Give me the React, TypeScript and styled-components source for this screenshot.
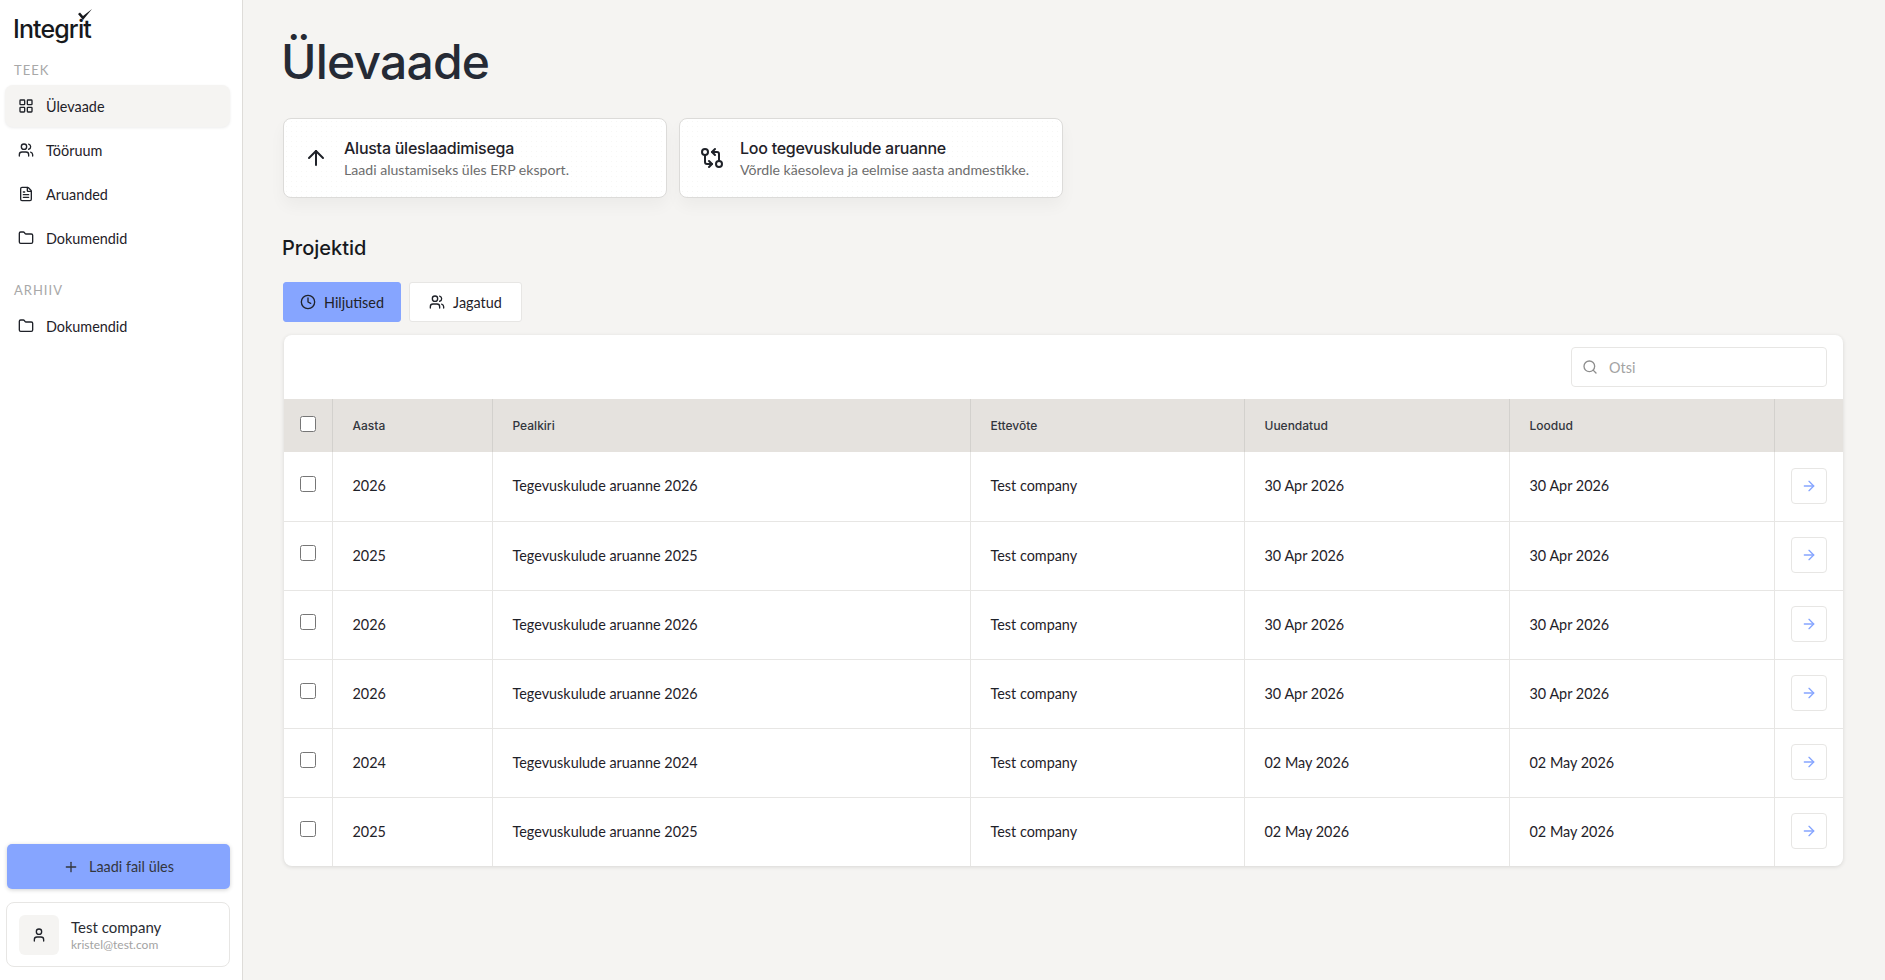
import styled, { createGlobalStyle } from "styled-components";
import {
    ArrowRight,
    ArrowUp,
    Clock,
    FileText,
    Folder,
    GitCompareArrows,
    LayoutGrid,
    Plus,
    Search,
    User,
    Users,
} from "lucide-react";

const accent = "#86a5ff";
const paper = "#f5f4f2";
const line = "#e7e6e4";
const ink = "#1f2229";

const rows = [
    { year: "2026", updated: "30 Apr 2026" },
    { year: "2025", updated: "30 Apr 2026" },
    { year: "2026", updated: "30 Apr 2026" },
    { year: "2026", updated: "30 Apr 2026" },
    { year: "2024", updated: "02 May 2026" },
    { year: "2025", updated: "02 May 2026" },
];

const columns = [48, 160, 478, 274, 265, 265, 69];

const App = () => {
    return (
        <Page>
            <GlobalStyle />
            <Sidebar>
                <Logo>
                    Integrit
                    <LogoCheck viewBox="0 0 14 11" width="14" height="11">
                        <path d="M0 5 L2 3.6 L5 7 L14 0 L5 11 Z" />
                    </LogoCheck>
                </Logo>
                <SectionLabel>TEEK</SectionLabel>
                <NavList>
                    <NavItem $active>
                        <LayoutGrid size={16} />
                        Ülevaade
                    </NavItem>
                    <NavItem>
                        <Users size={16} />
                        Tööruum
                    </NavItem>
                    <NavItem>
                        <FileText size={16} />
                        Aruanded
                    </NavItem>
                    <NavItem>
                        <Folder size={16} />
                        Dokumendid
                    </NavItem>
                </NavList>
                <SectionLabel $spaced>ARHIIV</SectionLabel>
                <NavList>
                    <NavItem>
                        <Folder size={16} />
                        Dokumendid
                    </NavItem>
                </NavList>
                <SidebarFooter>
                    <UploadButton>
                        <Plus size={16} />
                        Laadi fail üles
                    </UploadButton>
                    <UserCard>
                        <Avatar>
                            <User size={16} />
                        </Avatar>
                        <div>
                            <UserName>Test company</UserName>
                            <UserMail>kristel@test.com</UserMail>
                        </div>
                    </UserCard>
                </SidebarFooter>
            </Sidebar>

            <Main>
                <Title>Ülevaade</Title>
                <Actions>
                    <ActionCard>
                        <ArrowUp size={24} />
                        <div>
                            <ActionTitle>Alusta üleslaadimisega</ActionTitle>
                            <ActionText>
                                Laadi alustamiseks üles ERP eksport.
                            </ActionText>
                        </div>
                    </ActionCard>
                    <ActionCard>
                        <GitCompareArrows size={24} />
                        <div>
                            <ActionTitle>Loo tegevuskulude aruanne</ActionTitle>
                            <ActionText>
                                Võrdle käesoleva ja eelmise aasta andmestikke.
                            </ActionText>
                        </div>
                    </ActionCard>
                </Actions>

                <SectionTitle>Projektid</SectionTitle>
                <Tabs>
                    <Tab $active>
                        <Clock size={16} />
                        Hiljutised
                    </Tab>
                    <Tab>
                        <Users size={16} />
                        Jagatud
                    </Tab>
                </Tabs>

                <TableCard>
                    <Toolbar>
                        <SearchBox>
                            <Search size={16} />
                            <SearchInput placeholder="Otsi" />
                        </SearchBox>
                    </Toolbar>
                    <Table>
                        <colgroup>
                            {columns.map((width, i) => (
                                <col key={i} style={{ width }} />
                            ))}
                        </colgroup>
                        <thead>
                            <tr>
                                <CheckHead>
                                    <Checkbox type="checkbox" />
                                </CheckHead>
                                <HeadCell>Aasta</HeadCell>
                                <HeadCell>Pealkiri</HeadCell>
                                <HeadCell>Ettevõte</HeadCell>
                                <HeadCell>Uuendatud</HeadCell>
                                <HeadCell>Loodud</HeadCell>
                                <HeadCell />
                            </tr>
                        </thead>
                        <tbody>
                            {rows.map((row, i) => (
                                <tr key={i}>
                                    <CheckCell>
                                        <Checkbox type="checkbox" />
                                    </CheckCell>
                                    <Cell>{row.year}</Cell>
                                    <Cell>Tegevuskulude aruanne {row.year}</Cell>
                                    <Cell>Test company</Cell>
                                    <Cell>{row.updated}</Cell>
                                    <Cell>{row.updated}</Cell>
                                    <ArrowCell>
                                        <OpenButton>
                                            <ArrowRight size={16} />
                                        </OpenButton>
                                    </ArrowCell>
                                </tr>
                            ))}
                        </tbody>
                    </Table>
                </TableCard>
            </Main>
        </Page>
    );
};

const GlobalStyle = createGlobalStyle`
    * {
        box-sizing: border-box;
    }

    body {
        margin: 0;
        font-family: "Lato", "Liberation Sans", sans-serif;
        color: ${ink};
        background: ${paper};
    }
`;

const Page = styled.div`
    display: flex;

    height: 980px;
    overflow: hidden;
`;

const Sidebar = styled.aside`
    display: flex;
    flex-direction: column;
    flex-shrink: 0;

    width: 243px;
    padding: 0 12px 13px 5px;

    background: white;
    border-right: 1px solid #dedcd9;
`;

const Logo = styled.div`
    position: relative;

    width: fit-content;
    margin: 11px 0 0 8px;

    font-family: "Inter", sans-serif;
    font-size: 25px;
    font-weight: 500;
    line-height: 36px;
    letter-spacing: -0.9px;
    color: #17191d;
`;

const LogoCheck = styled.svg`
    position: absolute;
    top: -2px;
    right: -1px;

    & path {
        fill: #17191d;
    }
`;

const SectionLabel = styled.div<{ $spaced?: boolean }>`
    margin: ${(props) => (props.$spaced ? "24px" : "16px")} 0 7px 9px;

    font-size: 13px;
    line-height: 15px;
    letter-spacing: 1px;
    color: #a8a8a8;
`;

const NavList = styled.nav`
    display: flex;
    flex-direction: column;
    gap: 2px;
`;

const NavItem = styled.a<{ $active?: boolean }>`
    display: flex;
    align-items: center;
    gap: 12px;

    height: 42px;
    padding-left: 13px;

    font-size: 14.4px;
    color: ${ink};

    background: ${(props) => (props.$active ? paper : "transparent")};
    border-radius: 8px;
    box-shadow: ${(props) =>
        props.$active ? "0 1px 3px rgba(0, 0, 0, 0.08)" : "none"};
`;

const SidebarFooter = styled.div`
    display: flex;
    flex-direction: column;
    gap: 13px;

    margin-top: auto;
`;

const UploadButton = styled.button`
    display: flex;
    align-items: center;
    justify-content: center;
    gap: 10px;

    height: 45px;
    margin: 0 0 0 2px;

    font: inherit;
    font-size: 14.4px;
    color: #33363d;

    background: ${accent};
    border: none;
    border-radius: 5px;
    box-shadow: 0 1px 4px rgba(0, 0, 0, 0.18);
`;

const UserCard = styled.div`
    display: flex;
    align-items: center;
    gap: 12px;

    height: 65px;
    margin-left: 1px;
    padding: 0 12px;

    border: 1px solid ${line};
    border-radius: 8px;
`;

const Avatar = styled.div`
    display: flex;
    align-items: center;
    justify-content: center;

    width: 40px;
    height: 40px;

    background: ${paper};
    border-radius: 6px;
`;

const UserName = styled.div`
    font-size: 15px;
    line-height: 20px;
    color: #2a2c33;
`;

const UserMail = styled.div`
    font-size: 12px;
    line-height: 15px;
    color: #a3a3a3;
`;

const Main = styled.main`
    flex: 1;

    padding: 28px 42px 0 40px;
`;

const Title = styled.h1`
    margin: 0 0 0 -2px;

    font-family: "Inter", sans-serif;
    font-size: 48px;
    font-weight: 500;
    line-height: 68px;
    letter-spacing: -0.8px;
    color: #252a35;
`;

const Actions = styled.div`
    display: flex;
    gap: 12px;

    margin-top: 22px;
`;

const ActionCard = styled.div`
    display: flex;
    align-items: center;
    gap: 16px;

    width: 384px;
    height: 80px;
    padding: 0 20px;

    background-color: white;
    background-image: radial-gradient(#f7f7f5 0.6px, transparent 0.8px);
    background-size: 5px 5px;
    border: 1px solid #dcdbd9;
    border-radius: 8px;
    box-shadow: 0 8px 16px rgba(0, 0, 0, 0.04);
`;

const ActionTitle = styled.div`
    font-family: "Inter", sans-serif;
    font-size: 16px;
    font-weight: 500;
    line-height: 22px;
    letter-spacing: -0.25px;
`;

const ActionText = styled.div`
    font-size: 14.1px;
    line-height: 21px;
    color: #6d6d6d;
`;

const SectionTitle = styled.h2`
    margin: 36px 0 0 -1px;

    font-family: "Inter", sans-serif;
    font-size: 20px;
    font-weight: 500;
    line-height: 28px;
    color: #17191d;
`;

const Tabs = styled.div`
    display: flex;
    gap: 8px;

    margin-top: 20px;
`;

const Tab = styled.button<{ $active?: boolean }>`
    display: flex;
    align-items: center;
    justify-content: center;
    gap: 8px;

    min-width: 113px;
    height: 40px;
    padding: 0 16px;

    font: inherit;
    font-size: 14.4px;
    color: ${ink};

    background: ${(props) => (props.$active ? accent : "white")};
    border: 1px solid ${(props) => (props.$active ? accent : line)};
    border-radius: 3px;
`;

const TableCard = styled.section`
    margin: 13px 0 0 1px;
    overflow: hidden;

    background: white;
    border-radius: 8px;
    box-shadow: 0 1px 4px rgba(0, 0, 0, 0.12);
`;

const Toolbar = styled.div`
    display: flex;
    align-items: center;
    justify-content: flex-end;

    height: 64px;
    padding-right: 16px;
`;

const SearchBox = styled.label`
    display: flex;
    align-items: center;
    gap: 9px;

    width: 256px;
    height: 40px;
    padding-left: 10px;

    color: #8e8e8e;

    border: 1px solid ${line};
    border-radius: 4px;
`;

const SearchInput = styled.input`
    flex: 1;
    min-width: 0;

    font: inherit;
    font-size: 14.4px;

    border: none;
    outline: none;

    &::placeholder {
        color: #a3a3a3;
    }
`;

const Table = styled.table`
    width: 100%;

    table-layout: fixed;
    border-collapse: collapse;

    & tbody tr:not(:last-child) td {
        border-bottom: 1px solid ${line};
    }
`;

const HeadCell = styled.th`
    height: 53px;
    padding: 0 20px;

    font-family: "Inter", sans-serif;
    font-size: 12px;
    font-weight: 500;
    text-align: left;
    color: #33363d;

    background: #e5e2de;
    border-left: 1px solid #d3d1cd;

    &:first-child {
        border-left: none;
    }
`;

const CheckHead = styled(HeadCell)`
    padding: 0 0 0 16px;
`;

const Cell = styled.td`
    height: 69px;
    padding: 0 20px 1px;

    font-size: 14.4px;
    color: ${ink};

    border-left: 1px solid ${line};
`;

const CheckCell = styled.td`
    padding: 0 0 1px 16px;
`;

const ArrowCell = styled(Cell)`
    padding: 0 16px 1px;
`;

const Checkbox = styled.input`
    display: block;

    width: 16px;
    height: 16px;
    margin: 0 0 4px;
`;

const OpenButton = styled.button`
    display: flex;
    align-items: center;
    justify-content: center;

    width: 36px;
    height: 36px;
    padding: 0;

    color: ${accent};

    background: white;
    border: 1px solid ${line};
    border-radius: 4px;
`;

export default App;
